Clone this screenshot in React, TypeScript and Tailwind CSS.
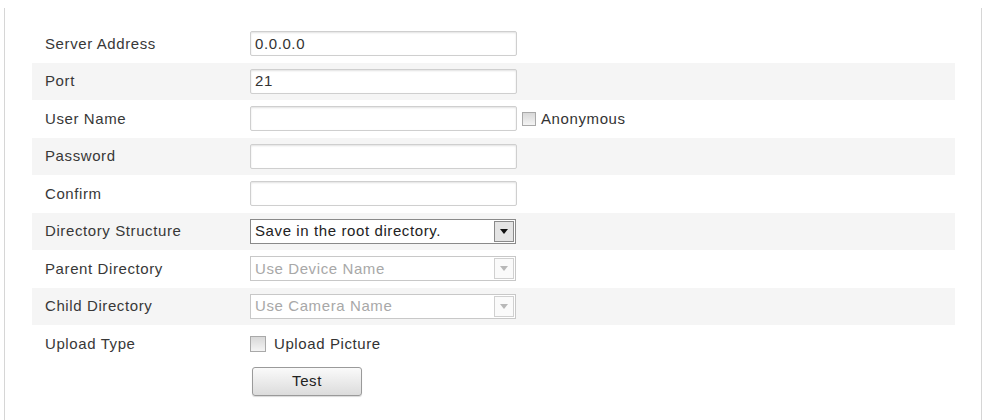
import React from "react";

const font = { fontFamily: '"Liberation Sans", Arial, sans-serif' };

function TextInput({ value }: { value?: string }) {
  return (
    <div className="flex h-[25px] w-[267px] items-center rounded-[2px] border border-[#cfcfcf] bg-white pl-[4px] text-[15px] tracking-[0.6px] text-[#333] shadow-[inset_0_1px_2px_rgba(0,0,0,0.12)]">
      {value}
    </div>
  );
}

function Select({ value, disabled }: { value: string; disabled?: boolean }) {
  return (
    <div
      className={
        "flex h-[25px] w-[266px] items-center border bg-white text-[15px] tracking-[0.6px] " +
        (disabled ? "border-[#c8c8c8] text-[#a8a8a8]" : "border-[#8a8a8a] text-[#222]")
      }
    >
      <span className="flex-1 pl-[4px]">{value}</span>
      <span
        className={
          "mr-[1px] flex h-[21px] w-[20px] items-center justify-center border " +
          (disabled ? "border-[#d0d0d0] bg-[#fafafa]" : "border-[#8a8a8a] bg-[#e4e4e4]")
        }
      >
        <svg width="8" height="5" viewBox="0 0 8 5">
          <path d="M0 0H8L4 5Z" fill={disabled ? "#b8b8b8" : "#111"} />
        </svg>
      </span>
    </div>
  );
}

function Checkbox({ size }: { size: number }) {
  return (
    <span
      className="inline-block border border-[#a9a9a9] bg-gradient-to-b from-[#d8d8d8] to-[#f4f4f4]"
      style={{ width: size, height: size }}
    />
  );
}

function Row({ label, shaded, children }: { label: string; shaded?: boolean; children?: React.ReactNode }) {
  return (
    <div className={"flex h-[37.5px] items-center " + (shaded ? "bg-[#f5f5f5]" : "")}>
      <div className="w-[218px] pl-[13px] text-[15px] tracking-[0.6px] text-[#383838]">{label}</div>
      <div className="flex items-center">{children}</div>
    </div>
  );
}

export default function App() {
  return (
    <div className="h-[420px] w-[985px] bg-white" style={font}>
      <div className="ml-[4px] mt-[8px] h-[412px] w-[978px] border-l border-r border-[#d6d6d6] pl-[27px] pt-[17px]">
        <div className="w-[923px]">
          <Row label="Server Address">
            <TextInput value="0.0.0.0" />
          </Row>
          <Row label="Port" shaded>
            <TextInput value="21" />
          </Row>
          <Row label="User Name">
            <TextInput />
            <span className="ml-[5px] flex items-center gap-[5px] text-[15px] tracking-[0.6px] text-[#333]">
              <Checkbox size={14} />
              Anonymous
            </span>
          </Row>
          <Row label="Password" shaded>
            <TextInput />
          </Row>
          <Row label="Confirm">
            <TextInput />
          </Row>
          <Row label="Directory Structure" shaded>
            <Select value="Save in the root directory." />
          </Row>
          <Row label="Parent Directory">
            <Select value="Use Device Name" disabled />
          </Row>
          <Row label="Child Directory" shaded>
            <Select value="Use Camera Name" disabled />
          </Row>
          <Row label="Upload Type">
            <span className="flex items-center gap-[8px] text-[15px] tracking-[0.6px] text-[#333]">
              <Checkbox size={16} />
              Upload Picture
            </span>
          </Row>
          <div className="flex h-[37.5px] items-center">
            <div className="w-[220px]" />
            <button className="h-[29px] w-[110px] rounded-[3px] border border-[#9a9a9a] bg-gradient-to-b from-[#fafafa] to-[#dcdcdc] text-[15px] tracking-[0.6px] text-[#222] shadow-[0_1px_1px_rgba(0,0,0,0.15)]">
              Test
            </button>
          </div>
        </div>
      </div>
    </div>
  );
}
